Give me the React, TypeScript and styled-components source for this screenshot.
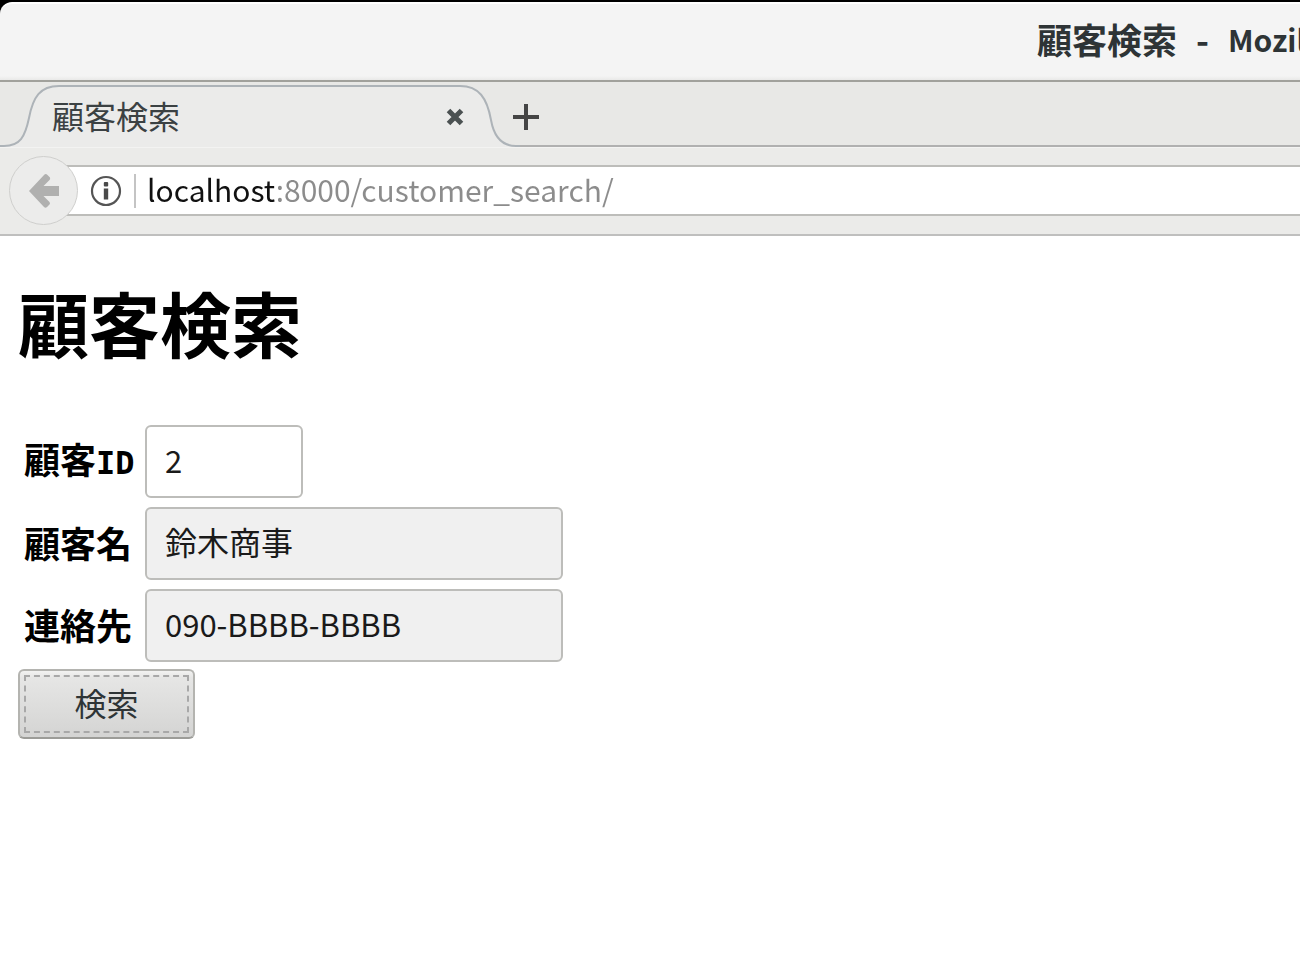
import React, { useState } from "react";
import styled, { createGlobalStyle } from "styled-components";

const GlobalStyle = createGlobalStyle`
  * { box-sizing: border-box; }
  html, body { margin: 0; background: #fff; }
  body {
    overflow-x: hidden;
    font-family: "Noto Sans CJK JP", sans-serif;
    color: #000;
  }
  button, input { font: inherit; margin: 0; }
`;

const Frame = styled.div`
  min-height: 100vh;
  background: #fff;
`;

const Desktop = styled.div`
  background: #000;
  padding-top: 2px;
`;

const TitleBar = styled.header`
  display: flex;
  align-items: center;
  gap: 19px;
  height: 80px;
  padding: 0 0 6px calc(80vw - 3px);
  overflow: hidden;
  white-space: nowrap;
  background: linear-gradient(#f4f4f4 0 72px, #e9e9e8);
  border-top: 2px solid #fff;
  border-bottom: 2px solid #a1a19c;
  border-top-left-radius: 12px;
  color: #2e3436;
  font-size: 35px;
  line-height: 48px;
  font-weight: 700;
`;

const AppName = styled.span`
  font-size: 30px;
`;

const TabStrip = styled.div`
  display: flex;
  height: 65px;
  background: linear-gradient(#e8e8e6 63px, #b0b0b0 63px);
`;

const Tab = styled.div`
  position: relative;
  display: flex;
  align-items: center;
  justify-content: space-between;
  width: 512px;
  padding: 0 46px 0 52px;
  color: #3b4143;
  font-size: 32px;
  line-height: 48px;
`;

const TabShape = styled.svg`
  position: absolute;
  left: 0;
  top: 0;
`;

const TabTitle = styled.span`
  position: relative;
`;

const IconButton = styled.button`
  position: relative;
  display: flex;
  align-items: center;
  justify-content: center;
  width: 28px;
  height: 60px;
  margin-top: 5px;
  padding: 0;
  border: 0;
  background: none;
`;

const CloseButton = styled(IconButton)`
  width: 22px;
`;

const Toolbar = styled.div`
  display: flex;
  align-items: center;
  height: 89px;
  padding: 0 0 1px 9px;
  background: #ebebe9;
  border-top: 1px solid #f3f3f2;
  border-bottom: 2px solid #bfbfbe;
`;

const BackButton = styled.button`
  position: relative;
  z-index: 1;
  display: flex;
  align-items: center;
  justify-content: center;
  flex: none;
  width: 69px;
  height: 69px;
  margin-right: -14px;
  padding: 0;
  border: 1px solid #cfcfcd;
  border-radius: 50%;
  background: #ececeb;
`;

const AddressField = styled.div`
  display: flex;
  align-items: center;
  flex: 1;
  height: 51px;
  padding-left: 26px;
  background: #fff;
  border: solid #bdbdba;
  border-width: 2px 0;
`;

const Divider = styled.span`
  width: 2px;
  height: 34px;
  margin: 0 11px 0 12px;
  background: #c4c4c4;
`;

const AddressInput = styled.input`
  flex: 1;
  min-width: 0;
  height: 47px;
  padding: 0 0 4px;
  border: 0;
  outline: 0;
  font-size: 30px;
  color: transparent;
  caret-color: #111;
  background: linear-gradient(to right, #111 128px, #8c8c8c 128px);
  background-clip: text;
`;

const Page = styled.main`
  padding: 33px 18px;
`;

const Heading = styled.h1`
  margin: 0 0 52px;
  font-size: 71px;
  line-height: 104px;
  font-weight: 700;
`;

const Fields = styled.div`
  display: grid;
  grid-template-columns: 111px auto;
  justify-content: start;
  align-items: center;
  gap: 9px 10px;
  padding-left: 6px;
  margin-bottom: 7px;
`;

const Label = styled.label`
  display: flex;
  align-items: baseline;
  padding-bottom: 3px;
  font-size: 36px;
  line-height: 52px;
  font-weight: 700;
  white-space: nowrap;
`;

const Mono = styled.span`
  font-family: "DejaVu Sans Mono", monospace;
  font-size: 32px;
`;

const TextBox = styled.input<{ $size: "short" | "long"; $latin?: boolean }>`
  width: ${(p) => (p.$size === "short" ? 158 : 418)}px;
  height: 73px;
  padding: 0 18px 5px;
  border: 2px solid #bdbdba;
  border-radius: 6px;
  outline: 0;
  color: #1a1a1a;
  font-size: ${(p) => (p.$latin ? 31 : 32)}px;
  background: ${(p) => (p.readOnly ? "#f0f0f0" : "#fff")};
`;

const SearchButton = styled.button`
  display: block;
  width: 177px;
  height: 70px;
  padding: 4px;
  border: 2px solid #b4b4b0;
  border-bottom-color: #9c9c98;
  border-radius: 6px;
  background: linear-gradient(#f2f2f1, #e6e6e5 10%, #d4d4d3);
  color: #2e3436;
  font-size: 32px;
  line-height: 50px;
`;

const FocusRing = styled.span`
  display: block;
  height: 58px;
  border: 2px dashed #a8a8a8;
`;

export default function App() {
  const [address, setAddress] = useState("localhost:8000/customer_search/");
  const [id, setId] = useState("2");

  return (
    <Frame>
      <GlobalStyle />
      <Desktop>
        <TitleBar>
          <span>顧客検索</span>
          <span>-</span>
          <AppName>Mozilla Firefox</AppName>
        </TitleBar>
      </Desktop>
      <TabStrip>
        <Tab>
          <TabShape width="520" height="65" viewBox="0 0 520 65" aria-hidden="true">
            <path
              d="M0 64H4C20 64 25 55 29 36C33 15 40 4 59 4H460C479 4 487 16 491 38C494 55 502 64 516 64H520V65H0Z"
              fill="#ebebea"
            />
            <path
              d="M0 64H4C20 64 25 55 29 36C33 15 40 4 59 4H460C479 4 487 16 491 38C494 55 502 64 516 64H520"
              fill="none"
              stroke="#adb3b8"
              strokeWidth="2"
            />
          </TabShape>
          <TabTitle>顧客検索</TabTitle>
          <CloseButton type="button" aria-label="タブを閉じる">
            <svg width="18" height="18" viewBox="0 0 18 18">
              <path d="M2.5 2.5L15.5 15.5M15.5 2.5L2.5 15.5" stroke="#4b5152" strokeWidth="5" />
            </svg>
          </CloseButton>
        </Tab>
        <IconButton type="button" aria-label="新しいタブ">
          <svg width="28" height="28" viewBox="0 0 28 28">
            <path d="M14 1V27M1 14H27" stroke="#454545" strokeWidth="4" />
          </svg>
        </IconButton>
      </TabStrip>
      <Toolbar>
        <BackButton type="button" aria-label="戻る">
          <svg width="32" height="36" viewBox="0 0 32 36">
            <path
              d="M1 18L16.500 1.500Q18 .5 19.500 2L22 4.500Q22.500 6 21.500 7L15.500 13H31V23H15.500L21.500 29Q22.500 30.500 21.500 31.500L19 34Q17.500 35.500 16 34Z"
              fill="#b0b0af"
            />
          </svg>
        </BackButton>
        <AddressField>
          <svg width="32" height="32" viewBox="0 0 32 32" aria-hidden="true">
            <circle cx="16" cy="16" r="14" fill="none" stroke="#555" strokeWidth="2.200" />
            <rect x="13.800" y="7" width="4.400" height="4.400" rx="1" fill="#4a4a4a" />
            <rect x="13.800" y="13.500" width="4.400" height="11" fill="#4a4a4a" />
          </svg>
          <Divider />
          <AddressInput
            aria-label="アドレス"
            spellCheck={false}
            value={address}
            onChange={(e) => setAddress(e.target.value)}
          />
        </AddressField>
      </Toolbar>
      <Page>
        <Heading>顧客検索</Heading>
        <form onSubmit={(e) => e.preventDefault()}>
          <Fields>
            <Label htmlFor="customer-id">
              顧客<Mono>ID</Mono>
            </Label>
            <TextBox
              id="customer-id"
              $size="short"
              $latin
              value={id}
              onChange={(e) => setId(e.target.value)}
            />
            <Label htmlFor="customer-name">顧客名</Label>
            <TextBox id="customer-name" $size="long" readOnly value="鈴木商事" />
            <Label htmlFor="customer-contact">連絡先</Label>
            <TextBox id="customer-contact" $size="long" $latin readOnly value="090-BBBB-BBBB" />
          </Fields>
          <SearchButton type="submit">
            <FocusRing>検索</FocusRing>
          </SearchButton>
        </form>
      </Page>
    </Frame>
  );
}
